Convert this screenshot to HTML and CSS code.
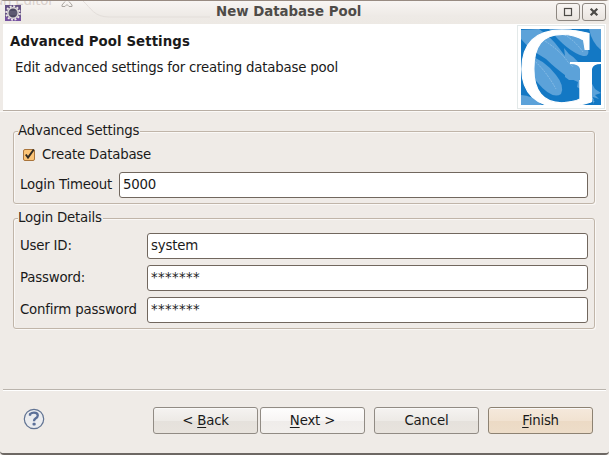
FILE: index.html
```html
<!DOCTYPE html>
<html lang="en">
<head>
<meta charset="utf-8">
<title>New Database Pool</title>
<link rel="stylesheet" href="styles.css">
</head>
<body>
<div class="window">
  <div class="titlebar">
    <span class="ghost-tab">an Editor</span>
    <svg class="ghost-line" width="150" height="24" viewBox="0 0 150 24" fill="none"><path d="M2 5.500V4L5 .5M12 5.500V4L9 .5M2 5.500H5L7 3.500L9 5.500H12" stroke="#aaa5a0"/><path d="M23 0C31 7 34 16 49 16H150" stroke="#e3deda"/></svg>
    <svg class="app-icon" width="16" height="16" viewBox="0 0 16 16"><rect width="16" height="16" fill="#655285"/><path d="M0 12H16V16H0Z" fill="#7551a0"/><circle cx="8" cy="8" r="6.700" fill="none" stroke="#eeeae6" stroke-width="2" stroke-dasharray="1.900 1.608"/><circle cx="8" cy="8" r="5.200" fill="#4d4962" stroke="#dedada" stroke-width="1.500"/><path d="M4 7H12M4 9H12" stroke="#77738b" stroke-width=".8"/></svg>
    <h1 class="title">New Database Pool</h1>
    <div class="controls">
      <span class="control"><svg width="10" height="10" viewBox="0 0 10 10"><rect x="1.500" y="1.500" width="7" height="7" fill="none" stroke="#4c4a47" stroke-width="1.200"/></svg></span>
      <span class="control"><svg width="10" height="10" viewBox="0 0 10 10"><path d="M1.700 1.700L8.300 8.300M8.300 1.700L1.700 8.300" stroke="#4c4a47" stroke-width="2.200"/></svg></span>
    </div>
  </div>
  <div class="header">
    <div>
      <h2 class="heading">Advanced Pool Settings</h2>
      <p class="subheading">Edit advanced settings for creating database pool</p>
    </div>
    <svg class="logo" width="88" height="84" viewBox="0 0 88 84">
      <rect x=".5" y=".5" width="87" height="83" fill="#fff" stroke="#e3e9e9"/>
      <rect x="4" y="4" width="80" height="76" fill="#1378c4"/>
      <g fill="#5ca2d9">
        <path d="M4 5L22 4Q34 12 42 23L48 31L47 23L52 29Q62 35 66 46L69 43L70 50L78 64L84 68L78 70L82 74L76 72L77 79L70 68L60 62L61 57L52 53Q38 43 29 34Q13 25 4 14Z"/>
        <path d="M32 4H54Q66 13 71 24Q73 32 66 31Q51 27 32 4Z"/>
        <path d="M8 29Q27 34 39 50Q48 61 44 69Q35 75 20 57Q11 47 8 29Z"/>
        <path d="M72 4H84V25Q75 18 72 4Z"/>
        <path d="M4 70Q15 70 25 80H4Z"/>
      </g>
      <path d="M23 13Q42 24 51 37Q66 50 77 77M42 7Q56 13 66 27M14 33Q28 44 39 64" stroke="#8dc0e5" stroke-width=".9" fill="none" stroke-dasharray="2 1"/>
      <text class="logo-letter" x="0" y="80.500" textLength="85" lengthAdjust="spacingAndGlyphs">G</text>
      <path d="M48 42H63V55H52L48 52Z" fill="#5ca2d9"/>
      <path d="M74 42H84V55H74Z" fill="#1378c4"/>
      <path d="M53 37H84V39Q76 39 75 44V77H63V44Q62 39 53 39Z" fill="#fff"/>
    </svg>
  </div>
  <div class="content">
    <section class="group">
      <h3 class="legend">Advanced Settings</h3>
      <div class="check-row">
        <svg class="checkbox" width="14" height="14" viewBox="0 0 14 14"><rect x="1.500" y="1.500" width="11" height="11" rx="1.500" fill="#fbc477" stroke="#a9743b"/><path d="M3.800 6.500L6 9.500L11.800 1.500" fill="none" stroke="#332c22" stroke-width="2"/></svg>
        <span>Create Database</span>
      </div>
      <div class="row timeout"><span class="label">Login Timeout</span><span class="input">5000</span></div>
    </section>
    <section class="group details">
      <h3 class="legend">Login Details</h3>
      <div class="row"><span class="label">User ID:</span><span class="input">system</span></div>
      <div class="row"><span class="label">Password:</span><span class="input masked">*******</span></div>
      <div class="row"><span class="label">Confirm password</span><span class="input masked">*******</span></div>
    </section>
  </div>
  <div class="footer">
    <svg class="help" width="22" height="22" viewBox="0 0 22 22"><circle cx="11" cy="11" r="9.700" fill="#ebecef" stroke="#617393" stroke-width="1.200"/><path d="M7 7.800V6.200Q8.800 4.600 11 4.600Q14.800 4.600 14.800 7.500Q14.800 9 12.500 10.400Q11 11.300 11 13.200" fill="none" stroke="#5b6f98" stroke-width="2.300"/><rect x="9.500" y="14.800" width="3.200" height="2.800" rx="1" fill="#5b6f98"/></svg>
    <span class="button back">&lt; <u>B</u>ack</span>
    <span class="button next"><u>N</u>ext &gt;</span>
    <span class="button">Cancel</span>
    <span class="button finish"><u>F</u>inish</span>
  </div>
</div>
</body>
</html>
```

FILE: styles.css
```css
* { box-sizing: border-box; }
body {
  margin: 0;
  width: 609px;
  height: 455px;
  overflow: hidden;
  background: #efebe7;
  color: #1a1a1a;
  font: 13.333px/18px "DejaVu Sans", sans-serif;
  letter-spacing: -.2px;
  white-space: nowrap;
}
h1, h2, h3, p { margin: 0; }
.window {
  display: flex;
  flex-direction: column;
  height: 455px;
  border-top: 1px solid #988b82;
  border-bottom: 2px solid #6d6864;
  border-radius: 4px;
  background: #efebe7;
}
.titlebar {
  position: relative;
  display: flex;
  height: 23px;
  overflow: hidden;
  background: linear-gradient(#f8f5f3, #eeeae6 65%, #ede9e4);
}
.ghost-tab {
  position: absolute;
  left: -5px;
  top: -9px;
  color: #d9d0cc;
}
.ghost-line { position: absolute; left: 60px; top: 0; }
.app-icon { position: absolute; left: 5px; top: 4px; }
.title {
  flex: 1;
  padding: 2px 0 0 216px;
  color: #4e4b48;
  font-size: 13.333px;
  line-height: 18px;
  letter-spacing: 0;
}
.controls {
  display: flex;
  gap: 2px;
  padding: 2px 3px 0 0;
}
.control {
  display: flex;
  align-items: center;
  justify-content: center;
  width: 24px;
  height: 18px;
  border: 1px solid #8d8781;
  border-radius: 3px;
  background: linear-gradient(#f8f5f3, #e9e4df);
}
.header {
  display: flex;
  justify-content: space-between;
  flex: none;
  height: 87px;
  margin: 0 3px;
  padding: 1px 1px 0 7px;
  background: #fff;
  border-bottom: 1px solid #b8aea4;
}
.heading {
  padding-top: 8px;
  font-size: 13.333px;
  line-height: 18px;
  letter-spacing: .07px;
}
.subheading { padding: 8px 0 0 5px; }
.logo-letter {
  fill: #fff;
  stroke: #fff;
  stroke-width: 1;
  font: 114px "Liberation Serif", serif;
}
.content {
  height: 278px;
  padding: 19px 14px 0 13px;
  border-top: 1px solid #fbf9f7;
}
.group {
  height: 73px;
  padding: 0 6px;
  border: 1px solid #c0b5a9;
  border-radius: 3px;
  box-shadow: 1px 1px #faf8f6, inset 1px 1px #faf8f6;
}
.details { height: 111px; margin-top: 14px; }
.legend {
  width: max-content;
  margin: -10px 0 0 -2px;
  padding-right: 1px;
  background: #efebe7;
  font-size: 13.333px;
  font-weight: normal;
  line-height: 18px;
}
.check-row {
  display: flex;
  align-items: center;
  gap: 6px;
  height: 18px;
  margin-top: 6px;
  padding-left: 2px;
}
.row {
  display: flex;
  align-items: center;
  height: 26px;
  margin-top: 6px;
}
.timeout { margin-top: 8px; }
.label { width: 127px; }
.timeout .label { width: 99px; }
.input {
  flex: 1;
  height: 26px;
  padding: 3px 3px;
  border: 1px solid #71675e;
  border-radius: 3px;
  background: #fff;
}
.masked { letter-spacing: .33px; }
.footer {
  display: flex;
  flex: 1;
  margin: 0 3px;
  padding: 17px 13px 0 20px;
  border-top: 1px solid #bab4ad;
  box-shadow: inset 0 1px #fff;
}
.help { margin: 1px 107px 0 0; }
.button {
  width: 105px;
  height: 27px;
  margin-right: 9px;
  padding-top: 4px;
  border: 1px solid #918b84;
  border-radius: 3px;
  text-align: center;
  background: linear-gradient(#f5f3f1, #edeae6 50%, #e5e1dc 52%, #e8e3dd);
  box-shadow: inset 0 1px #faf9f8;
}
.back { margin-left: 1px; margin-right: 2px; }
.next { background: linear-gradient(#fefdfd, #f7f5f4 50%, #efecea 52%, #f2efec); }
.finish {
  margin-right: 0;
  background: linear-gradient(#f5e9dc, #f1e2d1 50%, #ecdac5 52%, #edddc9);
  border-color: #8d8272;
}
.help, .button { flex: none; }
u { text-underline-offset: 2px; text-decoration-skip-ink: none; }
```
